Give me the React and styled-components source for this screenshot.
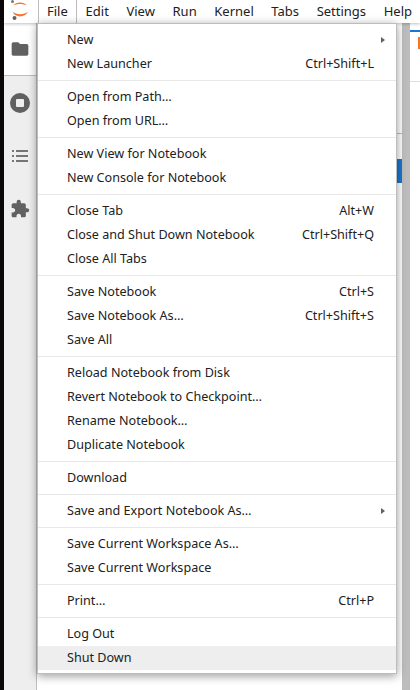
import React from "react";
import styled, { createGlobalStyle } from "styled-components";

const GlobalStyle = createGlobalStyle`
  html, body {
    margin: 0;
    padding: 0;
    height: 690px;
    overflow: hidden;
    background: #0a0606;
  }
`;

const topItems = ["File", "Edit", "View", "Run", "Kernel", "Tabs", "Settings", "Help"];

const menuGroups = [
  [
    { label: "New", arrow: true },
    { label: "New Launcher", keys: "Ctrl+Shift+L" },
  ],
  [{ label: "Open from Path…" }, { label: "Open from URL…" }],
  [{ label: "New View for Notebook" }, { label: "New Console for Notebook" }],
  [
    { label: "Close Tab", keys: "Alt+W" },
    { label: "Close and Shut Down Notebook", keys: "Ctrl+Shift+Q" },
    { label: "Close All Tabs" },
  ],
  [
    { label: "Save Notebook", keys: "Ctrl+S" },
    { label: "Save Notebook As…", keys: "Ctrl+Shift+S" },
    { label: "Save All" },
  ],
  [
    { label: "Reload Notebook from Disk" },
    { label: "Revert Notebook to Checkpoint…" },
    { label: "Rename Notebook…" },
    { label: "Duplicate Notebook" },
  ],
  [{ label: "Download" }],
  [{ label: "Save and Export Notebook As…", arrow: true }],
  [{ label: "Save Current Workspace As…" }, { label: "Save Current Workspace" }],
  [{ label: "Print…", keys: "Ctrl+P" }],
  [{ label: "Log Out" }, { label: "Shut Down", active: true }],
];

const App = () => {
  return (
    <>
      <GlobalStyle />
      <Page>
        <TopBar>
          <LogoCell>
            <svg width="33" height="23" viewBox="0 0 33 23">
              <path d="M9 5.500 C12 1.500 20 1.500 23 5.500 C19 3.500 13 3.500 9 5.500Z" fill="#f37726" />
              <path d="M8.500 11.500 C11 18 21 18 24 11.500 C20 15 12.500 15 8.500 11.500Z" fill="#f37726" />
              <circle cx="8.500" cy="1.500" r="1.500" fill="#767677" />
              <circle cx="10.500" cy="18" r="2" fill="#616262" />
            </svg>
          </LogoCell>
          {topItems.map((item, i) => (
            <TopItem key={item} $open={i === 0}>
              {item}
            </TopItem>
          ))}
        </TopBar>
        <Body>
          <SideBar>
            <SideButton $active>
              <svg width="20" height="20" viewBox="0 0 24 24" fill="#616161">
                <path d="M10 4H4c-1.100 0-2 .9-2 2v12c0 1.100.9 2 2 2h16c1.100 0 2-.9 2-2V8c0-1.100-.9-2-2-2h-8l-2-2z" />
              </svg>
            </SideButton>
            <SideButton>
              <svg width="20" height="20" viewBox="0 0 20 20">
                <circle cx="10" cy="10" r="10" fill="#616161" />
                <rect x="6" y="6" width="8" height="8" rx="1" fill="#eeeeee" />
              </svg>
            </SideButton>
            <SideButton>
              <svg width="16" height="14" viewBox="0 0 16 14" fill="#757575">
                <rect x="0" y="1" width="2" height="2" />
                <rect x="4" y="1" width="12" height="2" />
                <rect x="0" y="6" width="2" height="2" />
                <rect x="4" y="6" width="12" height="2" />
                <rect x="0" y="11" width="2" height="2" />
                <rect x="4" y="11" width="12" height="2" />
              </svg>
            </SideButton>
            <SideButton>
              <svg width="20" height="20" viewBox="0 0 24 24" fill="#616161">
                <path d="M20.500 11H19V7c0-1.100-.9-2-2-2h-4V3.500C13 2.120 11.880 1 10.500 1S8 2.120 8 3.500V5H4c-1.100 0-2 .9-2 2v3.800h1.500c1.500 0 2.700 1.200 2.700 2.700S5 16.200 3.500 16.200H2V20c0 1.100.9 2 2 2h3.800v-1.500c0-1.500 1.200-2.700 2.700-2.700s2.700 1.200 2.700 2.700V22H17c1.100 0 2-.9 2-2v-4h1.500c1.380 0 2.500-1.120 2.500-2.500S21.880 11 20.500 11z" />
              </svg>
            </SideButton>
          </SideBar>
          <Workspace>
            <MainArea />
            <ScrollTrack>
              <ScrollHead />
              <ScrollThumb />
            </ScrollTrack>
            <Splitter />
            <RightPane>
              <BlueLine />
              <TabStrip>
                <TabMark />
              </TabStrip>
            </RightPane>
          </Workspace>
        </Body>
        <Menu>
          {menuGroups.map((group, g) => (
            <Group key={g}>
              {group.map((row) => (
                <Row key={row.label} $active={row.active}>
                  <span>{row.label}</span>
                  {row.keys && <Keys>{row.keys}</Keys>}
                  {row.arrow && <Arrow />}
                </Row>
              ))}
            </Group>
          ))}
        </Menu>
      </Page>
    </>
  );
};

export default App;

const Page = styled.div`
  position: relative;
  width: 416px;
  height: 690px;
  margin-left: 4px;
  background: #fff;
  font-family: "Noto Sans", sans-serif;
  font-size: 12.6px;
  color: #212121;
  overflow: hidden;
`;
const TopBar = styled.div`
  position: relative;
  display: flex;
  height: 23px;
  background: #fff;
  box-shadow: 0 1px 3px rgba(0, 0, 0, 0.25);
  z-index: 1;
`;
const LogoCell = styled.div`
  width: 34px;
  height: 23px;
  flex: none;
  svg {
    display: block;
  }
`;
const TopItem = styled.div`
  flex: none;
  box-sizing: border-box;
  padding: 0 ${(p) => (p.$open ? "8px" : "8.8px")};
  font-size: 13px;
  line-height: 23px;
  background: #fff;
  border-right: ${(p) => (p.$open ? "1px solid #bdbdbd" : "none")};
  border-left: ${(p) => (p.$open ? "1px solid #bdbdbd" : "none")};
  position: relative;
  z-index: ${(p) => (p.$open ? 20 : "auto")};
  height: ${(p) => (p.$open ? "24px" : "23px")};
`;
const Body = styled.div`
  display: flex;
  height: 667px;
`;
const SideBar = styled.div`
  width: 33px;
  flex: none;
  background: #eeeeee;
  border-right: 1px solid #bdbdbd;
  box-sizing: border-box;
`;
const SideButton = styled.div`
  display: flex;
  align-items: center;
  justify-content: center;
  height: 53px;
  background: ${(p) => (p.$active ? "#fff" : "transparent")};
  border-bottom: ${(p) => (p.$active ? "1px solid #bdbdbd" : "none")};
  box-sizing: border-box;
`;
const Workspace = styled.div`
  flex: 1;
  display: flex;
`;
const MainArea = styled.div`
  width: 359px;
  flex: none;
  background: #fff;
`;
const ScrollTrack = styled.div`
  width: 6px;
  flex: none;
  background: #fff;
`;
const ScrollHead = styled.div`
  height: 110px;
  border-bottom: 1px solid #bdbdbd;
  margin-bottom: 25px;
`;
const ScrollThumb = styled.div`
  height: 24px;
  background: #1976d2;
`;
const Splitter = styled.div`
  width: 8px;
  flex: none;
  background: #bdbdbd;
`;
const RightPane = styled.div`
  flex: 1;
  background: #fff;
`;
const BlueLine = styled.div`
  height: 2px;
  margin-top: 7px;
  background: #1976d2;
`;
const TabStrip = styled.div`
  display: flex;
  justify-content: flex-end;
  height: 50px;
  padding-top: 5px;
  box-sizing: border-box;
  border-bottom: 1px solid #e0e0e0;
`;
const TabMark = styled.div`
  width: 2px;
  height: 12px;
  background: #f37726;
`;
const Menu = styled.div`
  position: absolute;
  top: 23px;
  left: 33px;
  width: 358px;
  background: #fff;
  border: 1px solid #bdbdbd;
  box-shadow: 0 2px 9px rgba(0, 0, 0, 0.4);
  z-index: 10;
  padding: 4px 0 3px;
`;
const Group = styled.div`
  & + & {
    border-top: 1px solid #e8e8e8;
    margin-top: 4px;
    padding-top: 4px;
  }
`;
const Row = styled.div`
  position: relative;
  display: flex;
  justify-content: space-between;
  height: 24px;
  line-height: 24px;
  padding: 0 22px 0 29px;
  background: ${(p) => (p.$active ? "#eeeeee" : "transparent")};
`;
const Keys = styled.span`
  color: #212121;
`;
const Arrow = styled.i`
  position: absolute;
  right: 11px;
  top: 9px;
  border-left: 4px solid #616161;
  border-top: 3px solid transparent;
  border-bottom: 3px solid transparent;
`;
